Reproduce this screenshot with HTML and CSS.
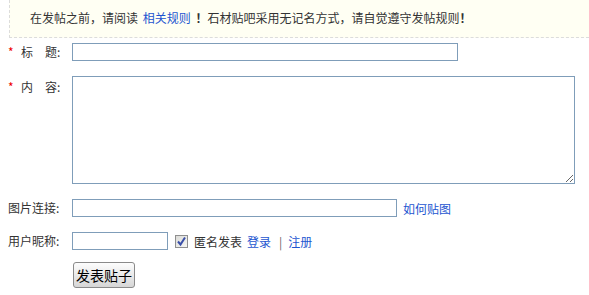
FILE: index.html
```html
<!DOCTYPE html>
<html>
<head>
	<meta charset="utf-8">
	<title>发表贴子</title>
	<link rel="stylesheet" href="styles.css">
</head>
<body>
	<div class="notice">
		在发帖之前，请阅读 <a href="#">相关规则</a> <b>！</b>石材贴吧采用无记名方式，请自觉遵守发帖规则<b>！</b>
	</div>

	<form class="post">
		<div class="row">
			<label class="lbl"><span class="req">*</span>标　题:</label>
			<input type="text" class="txt title">
		</div>
		<div class="row top">
			<label class="lbl"><span class="req">*</span>内　容:</label>
			<textarea class="content"></textarea>
		</div>
		<div class="row">
			<label class="lbl">图片连接:</label>
			<input type="text" class="txt pic">
			<a href="#" class="help">如何贴图</a>
		</div>
		<div class="row">
			<label class="lbl">用户昵称:</label>
			<input type="text" class="txt nick">
			<span class="check">
				<svg width="11" height="11" viewBox="0 0 11 11"><path d="M2 5.5 L4.5 8.5 L9 1.5" fill="none" stroke="#3a4fa8" stroke-width="2"/></svg>
			</span>
			<span class="anon">匿名发表</span>
			<a href="#">登录</a>
			<span class="sep">|</span>
			<a href="#">注册</a>
		</div>
		<div class="row btnrow">
			<button type="button" class="submit">发表贴子</button>
		</div>
	</form>
</body>
</html>
```

FILE: styles.css
```css
* {
	font-family: "Noto Sans CJK SC", "Noto Sans", sans-serif;
	box-sizing: border-box;
}
body {
	margin: 0;
	font-size: 12px;
	color: #333;
	background: #fff;
}
a {
	color: #1d55d0;
	text-decoration: none;
}
.notice {
	margin-left: 9px;
	height: 38px;
	line-height: 35px;
	padding-left: 20px;
	background-color: #fffff3;
	border-left: 1px dashed #dcdcdc;
	border-bottom: 1px dashed #dcdcdc;
	white-space: nowrap;
}
.notice a {
	margin: 0 2px;
}
.notice b {
	color: #333;
}
.post {
	margin: 0;
}
.row {
	display: flex;
	align-items: center;
	margin-top: 15px;
	height: 18px;
}
.row:first-child {
	margin-top: 5px;
}
.row.top {
	align-items: flex-start;
	height: 108px;
}
.row.top .lbl {
	padding-top: 3px;
}
.lbl {
	width: 72px;
	padding-left: 8px;
	line-height: 16px;
	white-space: nowrap;
}
.req {
	display: inline-block;
	width: 13px;
	color: #e00;
}
.txt, .content {
	border: 1px solid #7f9db9;
	height: 18px;
	padding: 0 2px;
	font-size: 12px;
	outline: none;
}
.title {
	width: 386px;
}
.content {
	width: 503px;
	height: 108px;
	resize: both;
}
.pic {
	width: 325px;
}
.nick {
	width: 96px;
}
.help {
	margin-left: 6px;
}
.check {
	width: 13px;
	height: 13px;
	margin: 0 6px 0 7px;
	border: 1px solid #8f8f8f;
	background: linear-gradient(135deg, #dcdcd8, #f6f6f4);
	display: flex;
	align-items: center;
	justify-content: center;
}
.anon {
	margin-right: 5px;
}
.sep {
	color: #666;
	margin: 0 6px 0 8px;
}
.btnrow {
	margin-top: 12px;
	height: 26px;
	padding-left: 73px;
}
.submit {
	width: 62px;
	height: 26px;
	padding: 0;
	font-size: 14px;
	color: #000;
	border: 1px solid #8a8a8a;
	border-radius: 3px;
	background: linear-gradient(#fdfdfd, #e6e6e6 60%, #d6d6d6);
}
```
